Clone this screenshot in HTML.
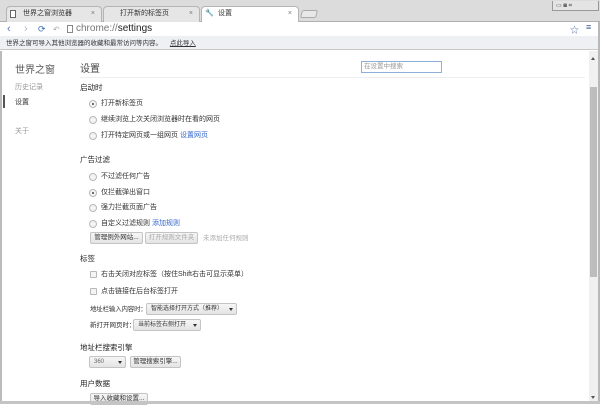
<!DOCTYPE html>
<html><head><meta charset="utf-8"><style>
*{margin:0;padding:0;box-sizing:border-box}
body{width:600px;height:404px;overflow:hidden;background:#fff;font-family:"Liberation Sans","Noto Sans CJK SC",sans-serif;position:relative;color:#303030}
.a{position:absolute;white-space:nowrap}
.s{font-size:7px;line-height:9px;color:#333}
.h{font-size:7.5px;line-height:10px;color:#222}
.tab{position:absolute;top:6px;height:16px;background:#e6e6e6;border:1px solid #b4b4b4;border-bottom:none;border-radius:4px 4px 0 0;font-size:7px;line-height:14px;padding-left:16px;color:#333}
.tab .x{position:absolute;right:6px;top:0;color:#777;font-size:7px}
.rd{position:absolute;width:8px;height:8px;border:1px solid #b8b8b8;border-radius:50%;background:#f4f4f4}
.rd.on::after{content:"";position:absolute;left:2px;top:2px;width:2px;height:2px;border-radius:50%;background:#444}
.cb{position:absolute;width:7px;height:7px;border:1px solid #b8b8b8;background:#f4f4f4;border-radius:1px}
.btn{position:absolute;height:12px;border:1px solid #c4c4c4;border-radius:2px;background:linear-gradient(#f6f6f6,#e4e4e4);font-size:6.5px;line-height:10px;text-align:center;color:#333}
.sel{position:absolute;height:12px;border:1px solid #c4c4c4;border-radius:2px;background:linear-gradient(#f6f6f6,#e4e4e4);font-size:6px;line-height:10px;color:#333;padding-left:4px;overflow:hidden}
.sel::after{content:"";position:absolute;right:3px;top:4px;border:2.5px solid transparent;border-top:3px solid #333}
.link{color:#3366cc}
</style></head><body>
<div class="a" style="left:0;top:0;width:600px;height:22px;background:#dcdcdc;border-bottom:1px solid #b0b0b0"></div>
<div class="tab" style="left:6px;width:96px">世界之窗浏览器<span class="x">×</span></div>
<div class="a" style="left:10px;top:10px;width:6px;height:8px;border:1px solid #666;background:#fff"></div>
<div class="tab" style="left:103px;width:97px">打开新的标签页<span class="x">×</span></div>
<div class="tab" style="left:201px;width:98px;background:#fff;height:17px">设置<span class="x">×</span></div>
<div class="a" style="left:205px;top:9px;font-size:7px;color:#333">🔧</div>
<div class="a" style="left:301px;top:10px;width:16px;height:8px;border:1px solid #aaa;border-radius:2px;background:#e8e8e8;transform:skewX(-15deg)"></div>
<div class="a" style="left:552px;top:1px;width:47px;height:10px;border:1px solid #999;border-top:none;background:#e4e4e4"></div>
<div class="a" style="left:556px;top:2px;font-size:6px;color:#555">▭ ◙ ⌗</div>
<div class="a" style="left:0;top:22px;width:600px;height:14px;background:#fff"></div>
<div class="a" style="left:7px;top:22px;font-size:11px;color:#4a78b8;line-height:14px">‹</div>
<div class="a" style="left:24px;top:22px;font-size:11px;color:#aab8cc;line-height:14px">›</div>
<div class="a" style="left:38px;top:24px;font-size:9px;color:#3a6fb5;line-height:11px">⟳</div>
<div class="a" style="left:53px;top:24px;font-size:8px;color:#aaa;line-height:11px">↶</div>
<div class="a" style="left:67px;top:25px;width:6px;height:8px;border:1px solid #888"></div>
<div class="a" style="left:76px;top:22px;font-size:10px;line-height:14px;color:#777">chrome://<b style="color:#222;font-weight:normal">settings</b></div>
<div class="a" style="left:570px;top:23px;font-size:9px;color:#5577aa">☆</div>
<div class="a" style="left:586px;top:22px;font-size:9px;color:#3a5a90">≡</div>
<div class="a" style="left:0;top:36px;width:600px;height:14px;background:#eef0f4;border-bottom:1px solid #c8c8c8"></div>
<div class="a s" style="left:6px;top:39px;font-size:6.5px">世界之窗可导入其他浏览器的收藏和最常访问等内容。 <span style="text-decoration:underline;margin-left:6px">点此导入</span></div>
<div class="a" style="left:0;top:51px;width:2px;height:353px;background:#bbb"></div>
<div class="a" style="left:15px;top:61px;font-size:10px;color:#555">世界之窗</div>
<div class="a s" style="left:15px;top:83px;color:#999">历史记录</div>
<div class="a s" style="left:15px;top:98px">设置</div>
<div class="a" style="left:3px;top:95px;width:2px;height:13px;background:#555"></div>
<div class="a s" style="left:15px;top:127px;color:#999">关于</div>
<div class="a" style="left:80px;top:60px;font-size:10px;color:#444">设置</div>
<div class="a" style="left:361px;top:61px;width:81px;height:12px;border:1px solid #8fb0d6;font-size:6.5px;line-height:10px;color:#999;padding-left:2px">在设置中搜索</div>
<div class="a" style="left:80px;top:77px;width:505px;height:1px;background:#eee"></div>
<div class="a h" style="left:80px;top:83px">启动时</div>
<div class="rd on" style="left:89px;top:100px"></div><div class="a s" style="left:101px;top:99px">打开新标签页</div>
<div class="rd" style="left:89px;top:116px"></div><div class="a s" style="left:101px;top:115px">继续浏览上次关闭浏览器时在看的网页</div>
<div class="rd" style="left:89px;top:132px"></div><div class="a s" style="left:101px;top:131px">打开特定网页或一组网页 <span class="link">设置网页</span></div>
<div class="a h" style="left:80px;top:155px">广告过滤</div>
<div class="rd" style="left:89px;top:173px"></div><div class="a s" style="left:101px;top:172px">不过滤任何广告</div>
<div class="rd on" style="left:89px;top:189px"></div><div class="a s" style="left:101px;top:188px">仅拦截弹出窗口</div>
<div class="rd" style="left:89px;top:204px"></div><div class="a s" style="left:101px;top:203px">强力拦截页面广告</div>
<div class="rd" style="left:89px;top:220px"></div><div class="a s" style="left:101px;top:219px">自定义过滤规则 <span class="link">添加规则</span></div>
<div class="btn" style="left:90px;top:232px;width:53px">管理例外网站...</div>
<div class="btn" style="left:145px;top:232px;width:53px;color:#aaa">打开规则文件夹</div>
<div class="a s" style="left:203px;top:234px;color:#aaa;font-size:6.5px">未添加任何规则</div>
<div class="a h" style="left:80px;top:254px">标签</div>
<div class="cb" style="left:90px;top:271px"></div><div class="a s" style="left:101px;top:270px">右击关闭对应标签（按住Shift右击可显示菜单）</div>
<div class="cb" style="left:90px;top:288px"></div><div class="a s" style="left:101px;top:287px">点击链接在后台标签打开</div>
<div class="a s" style="left:90px;top:305px;font-size:6.5px;letter-spacing:-0.2px">地址栏输入内容时：</div>
<div class="sel" style="left:146px;top:303px;width:91px">智能选择打开方式（推荐）</div>
<div class="a s" style="left:90px;top:321px;font-size:6.5px">新打开网页时：</div>
<div class="sel" style="left:133px;top:319px;width:68px">当前标签右侧打开</div>
<div class="a h" style="left:80px;top:343px">地址栏搜索引擎</div>
<div class="sel" style="left:89px;top:356px;width:37px;color:#666">360</div>
<div class="btn" style="left:130px;top:356px;width:51px">管理搜索引擎...</div>
<div class="a h" style="left:80px;top:379px">用户数据</div>
<div class="btn" style="left:90px;top:393px;width:58px">导入收藏和设置...</div>
<div class="a" style="left:589px;top:51px;width:9px;height:353px;background:#f0f0f0"></div>
<div class="a" style="left:590px;top:87px;width:7px;height:190px;background:#bdbdbd"></div>
<div class="a" style="left:591px;top:55px;border:2px solid transparent;border-bottom:3px solid #555"></div>
<div class="a" style="left:591px;top:396px;border:2px solid transparent;border-top:3px solid #555"></div>
<div class="a" style="left:598px;top:22px;width:2px;height:382px;background:#b8b8b8"></div>
<div class="a" style="left:0;top:401px;width:600px;height:3px;background:#c4c4c4"></div>
</body></html>
